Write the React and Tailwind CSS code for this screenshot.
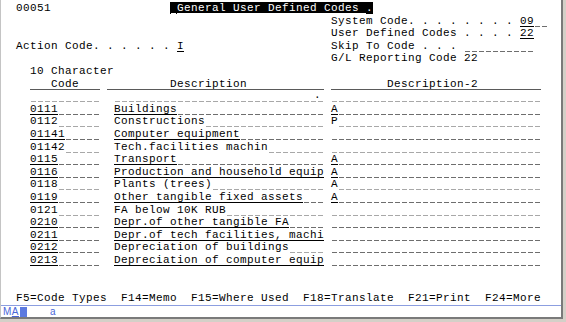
import React from 'react';

const WIDTH = {
  1: 'w-[7px]',
  2: 'w-[14px]',
  4: 'w-[28px]',
  10: 'w-[70px]',
  30: 'w-[210px]',
  31: 'w-[217px]',
};

const DASH =
  'bg-[repeating-linear-gradient(90deg,transparent_0_1px,#6e6e6e_1px_6px,transparent_6px_7px)] bg-no-repeat bg-bottom bg-[length:100%_1px]';
const DASH_LIGHT =
  'bg-[repeating-linear-gradient(90deg,transparent_0_1px,#a8a8a8_1px_6px,transparent_6px_7px)] bg-no-repeat bg-bottom bg-[length:100%_1px]';
const SOLID = 'bg-[linear-gradient(#000,#000)] bg-no-repeat bg-bottom bg-[length:100%_1px]';

const rows = [
  { code: '0111', desc: 'Buildings', d2: 'A', u: true },
  { code: '0112', desc: 'Constructions', d2: 'P', u: false },
  { code: '01141', desc: 'Computer equipment', d2: '', u: true },
  { code: '01142', desc: 'Tech.facilities machin', d2: '', u: false },
  { code: '0115', desc: 'Transport', d2: 'A', u: true },
  { code: '0116', desc: 'Production and household equip', d2: 'A', u: true },
  { code: '0118', desc: 'Plants (trees)', d2: 'A', u: false },
  { code: '0119', desc: 'Other tangible fixed assets', d2: 'A', u: true },
  { code: '0121', desc: 'FA below 10K RUB', d2: '', u: false },
  { code: '0210', desc: 'Depr.of other tangible FA', d2: '', u: true },
  { code: '0211', desc: 'Depr.of tech facilities, machi', d2: '', u: true },
  { code: '0212', desc: 'Depreciation of buildings', d2: '', u: true, du: false },
  { code: '0213', desc: 'Depreciation of computer equip', d2: '', u: true },
];

function T({ children }) {
  return <span className="whitespace-pre">{children}</span>;
}

function Field({ w, text = '', u = false }) {
  return (
    <span className={`flex h-[12px] ${WIDTH[w]} ${u ? DASH : DASH_LIGHT}`}>
      {text && (
        <span className={`h-[12px] whitespace-pre ${u ? SOLID : 'bg-white'}`}>{text}</span>
      )}
    </span>
  );
}

function Head({ w, text }) {
  return (
    <span
      className={`h-[12px] whitespace-pre ${WIDTH[w]} bg-[linear-gradient(#5a5a5a,#5a5a5a)] bg-no-repeat bg-bottom bg-[length:100%_1px]`}
    >
      {text}
    </span>
  );
}

function Row({ children }) {
  return <div className="flex h-[12.6px] leading-[12.6px]">{children}</div>;
}

export default function App() {
  return (
    <div className="w-[566px] h-[322px] bg-[#d4d0c8] overflow-hidden">
      <div className="flex flex-col w-[563px] h-[319px] bg-white border-l border-l-[#c4c4c4] border-r-2 border-b-2 border-r-[#7a7a7a] border-b-[#7a7a7a]">
        <div className="pl-[1px] pt-[2px] text-black text-[11px] tracking-[0.4px] font-['Liberation_Mono',monospace]">
          {/* Header */}
          <Row>
            <T>{'  00051                 '}</T>
            <span className="flex w-[203px] h-[12px] bg-black text-white">
              <span className="w-[14px] h-[12px] bg-[linear-gradient(#fff,#fff)] bg-no-repeat bg-[position:1px_100%] bg-[length:5px_1px]" />
              <span className="h-[12px] whitespace-pre bg-[linear-gradient(#fff,#fff)] bg-no-repeat bg-bottom bg-[length:100%_1px]">
                {'General User Defined Codes '}
              </span>
              <T>.</T>
            </span>
          </Row>
          <Row>
            <T>{' '.repeat(47) + 'System Code. . . . . . . . '}</T>
            <Field w={4} text="09" u />
          </Row>
          <Row>
            <T>{' '.repeat(47) + 'User Defined Codes . . . . '}</T>
            <Field w={2} text="22" u />
          </Row>
          <Row>
            <T>{'  Action Code. . . . . . '}</T>
            <Field w={1} text="I" u />
            <T>{' '.repeat(21) + 'Skip To Code . . . '}</T>
            <Field w={10} u />
          </Row>
          <Row>
            <T>{' '.repeat(47) + 'G/L Reporting Code 22'}</T>
          </Row>
          <Row>
            <T>{'    10 Character'}</T>
          </Row>
          <Row>
            <T>{'    '}</T>
            <Head w={10} text="   Code" />
            <T> </T>
            <Head w={31} text="         Description" />
            <T> </T>
            <Head w={30} text="        Description-2" />
          </Row>
          <Row>
            <T>{'    '}</T>
            <Field w={10} />
            <T>{'  '}</T>
            <span className={`flex justify-end h-[12px] w-[210px] ${DASH_LIGHT}`}>
              <span className="pr-[3px] leading-[11px]">.</span>
            </span>
            <T> </T>
            <Field w={30} />
          </Row>

          {/* Codes */}
          {rows.map((r) => (
            <Row key={r.code}>
              <T>{'    '}</T>
              <Field w={10} text={r.code} u={r.u} />
              <T>{'  '}</T>
              <Field w={30} text={r.desc} u={r.du ?? r.u} />
              <T> </T>
              <Field w={30} text={r.d2} u={r.u} />
            </Row>
          ))}

          <Row />
          <Row />
          <Row>
            <T>{'  F5=Code Types  F14=Memo  F15=Where Used  F18=Translate  F21=Print  F24=More'}</T>
          </Row>
        </div>

        {/* Status line */}
        <div className="flex items-center h-[12px] mt-[1px] border-t border-[#8c9ee0] text-[#4a66d8] text-[10px] leading-[11px] font-['Liberation_Sans',sans-serif]">
          <span className="pl-[2px] tracking-[0.5px]">
            M<span className="underline">A</span>
          </span>
          <span className="w-[7px] h-[10px] ml-[1px] bg-[#5c7ae0]" />
          <span className="ml-[23px]">a</span>
        </div>
      </div>
    </div>
  );
}
